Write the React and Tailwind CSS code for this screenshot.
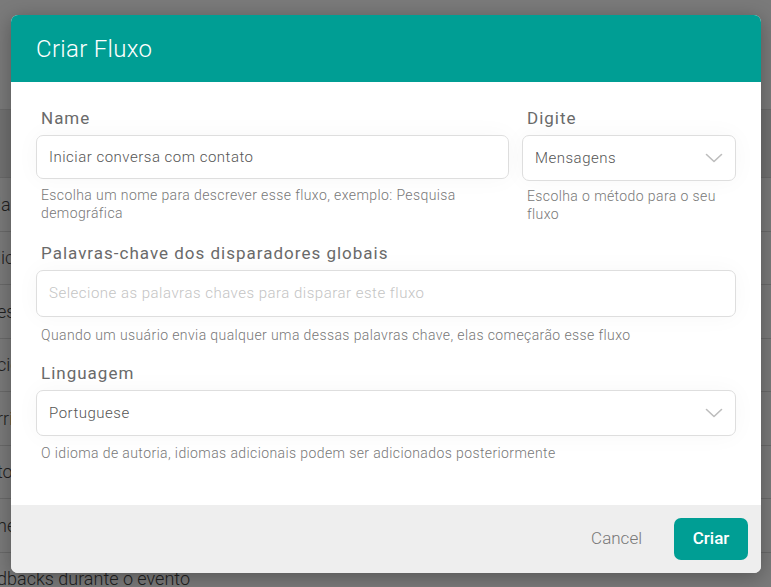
import React from "react";

const Chevron = () => (
  <svg width="18" height="10" viewBox="0 0 18 10" fill="none" className="shrink-0">
    <path d="M1.5 1.5 L9 8.5 L16.5 1.5" stroke="#bdbdbd" strokeWidth="1.6" strokeLinecap="round" strokeLinejoin="round" />
  </svg>
);

const rows = [
  "lados de satisfação",
  "licença de uso do produto",
  "esquisa de mercado",
  "ciclo de atendimento",
  "rrida de testes",
  "tos de boas vindas",
  "hef campanha de marketing",
];

const label = "pl-[5px] text-[17px] leading-[22px] text-[#6a6a6a] tracking-[1px]";
const helper = "pl-[5px] text-[14px] leading-[18px] text-[#777] font-light tracking-[0.4px]";
const box = "rounded-[7px] border border-[#dedede] bg-white flex items-center px-[12px] shadow-[0_0_24px_rgba(0,0,0,0.035)]";
const val = "text-[15px] font-light tracking-[0.5px]";

export default function App() {
  return (
    <div className="relative w-[771px] h-[587px] overflow-hidden bg-white" style={{ fontFamily: "Roboto, 'Liberation Sans', sans-serif" }}>
      {/* page behind */}
      <div className="flex flex-col">
        <div className="h-[110px] border-b border-[#e0e0e0]"></div>
        <div className="h-[68px] bg-[#ececec] border-b border-[#dcdcdc]"></div>
        {rows.map((r, i) => (
          <div key={i} className="h-[53.5px] border-b border-[#dcdcdc] flex items-center shrink-0">
            <span className="text-[18px] text-[#444] font-light whitespace-nowrap -ml-[3px]">{r}</span>
          </div>
        ))}
        <div className="h-[52px] flex items-center shrink-0">
          <span className="text-[18px] text-[#444] font-light whitespace-nowrap -ml-[3px]">dbacks durante o evento</span>
        </div>
      </div>

      {/* overlay */}
      <div className="absolute inset-0 bg-[rgba(0,0,0,0.52)]"></div>

      {/* modal */}
      <div className="absolute left-[11px] top-[15px] w-[750px] h-[558px] bg-white rounded-[7px] overflow-hidden flex flex-col shadow-[0_4px_20px_rgba(0,0,0,0.3)]">
        <div className="h-[67px] bg-[#009e94] flex items-center pl-[25px] shrink-0">
          <h1 className="text-[24px] text-white font-light tracking-[0.3px]">Criar Fluxo</h1>
        </div>

        <div className="flex-1 flex flex-col px-[25px] pt-[25px]">
          <div className="flex gap-[13px]">
            <div className="w-[473px] flex flex-col">
              <label className={label}>Name</label>
              <div className={"mt-[6px] h-[44px] " + box}>
                <span className={val + " text-[#555]"}>Iniciar conversa com contato</span>
              </div>
              <p className={"mt-[7px] " + helper}>
                Escolha um nome para descrever esse fluxo, exemplo: Pesquisa demográfica
              </p>
            </div>
            <div className="w-[214px] flex flex-col">
              <label className={label}>Digite</label>
              <div className={"mt-[6px] h-[46px] justify-between " + box}>
                <span className={val + " text-[#555]"}>Mensagens</span>
                <Chevron />
              </div>
              <p className={"mt-[6px] " + helper}>
                Escolha o método para o seu fluxo
              </p>
            </div>
          </div>

          <label className={"mt-[19px] " + label}>Palavras-chave dos disparadores globais</label>
          <div className={"mt-[6px] h-[47px] " + box}>
            <span className={val + " text-[#c4c4c4]"}>Selecione as palavras chaves para disparar este fluxo</span>
          </div>
          <p className={"mt-[9px] " + helper}>
            Quando um usuário envia qualquer uma dessas palavras chave, elas começarão esse fluxo
          </p>

          <label className={"mt-[18px] " + label}>Linguagem</label>
          <div className={"mt-[6px] h-[46px] justify-between " + box}>
            <span className={val + " text-[#555]"}>Portuguese</span>
            <Chevron />
          </div>
          <p className={"mt-[8px] " + helper}>
            O idioma de autoria, idiomas adicionais podem ser adicionados posteriormente
          </p>
        </div>

        <div className="h-[68px] bg-[#eeeeee] flex items-center justify-end gap-[32px] pr-[13px] shrink-0">
          <button className="text-[17px] text-[#777] font-light">Cancel</button>
          <button className="h-[42px] w-[74px] rounded-[7px] bg-[#009e94] text-white text-[17px] font-medium">Criar</button>
        </div>
      </div>
    </div>
  );
}
